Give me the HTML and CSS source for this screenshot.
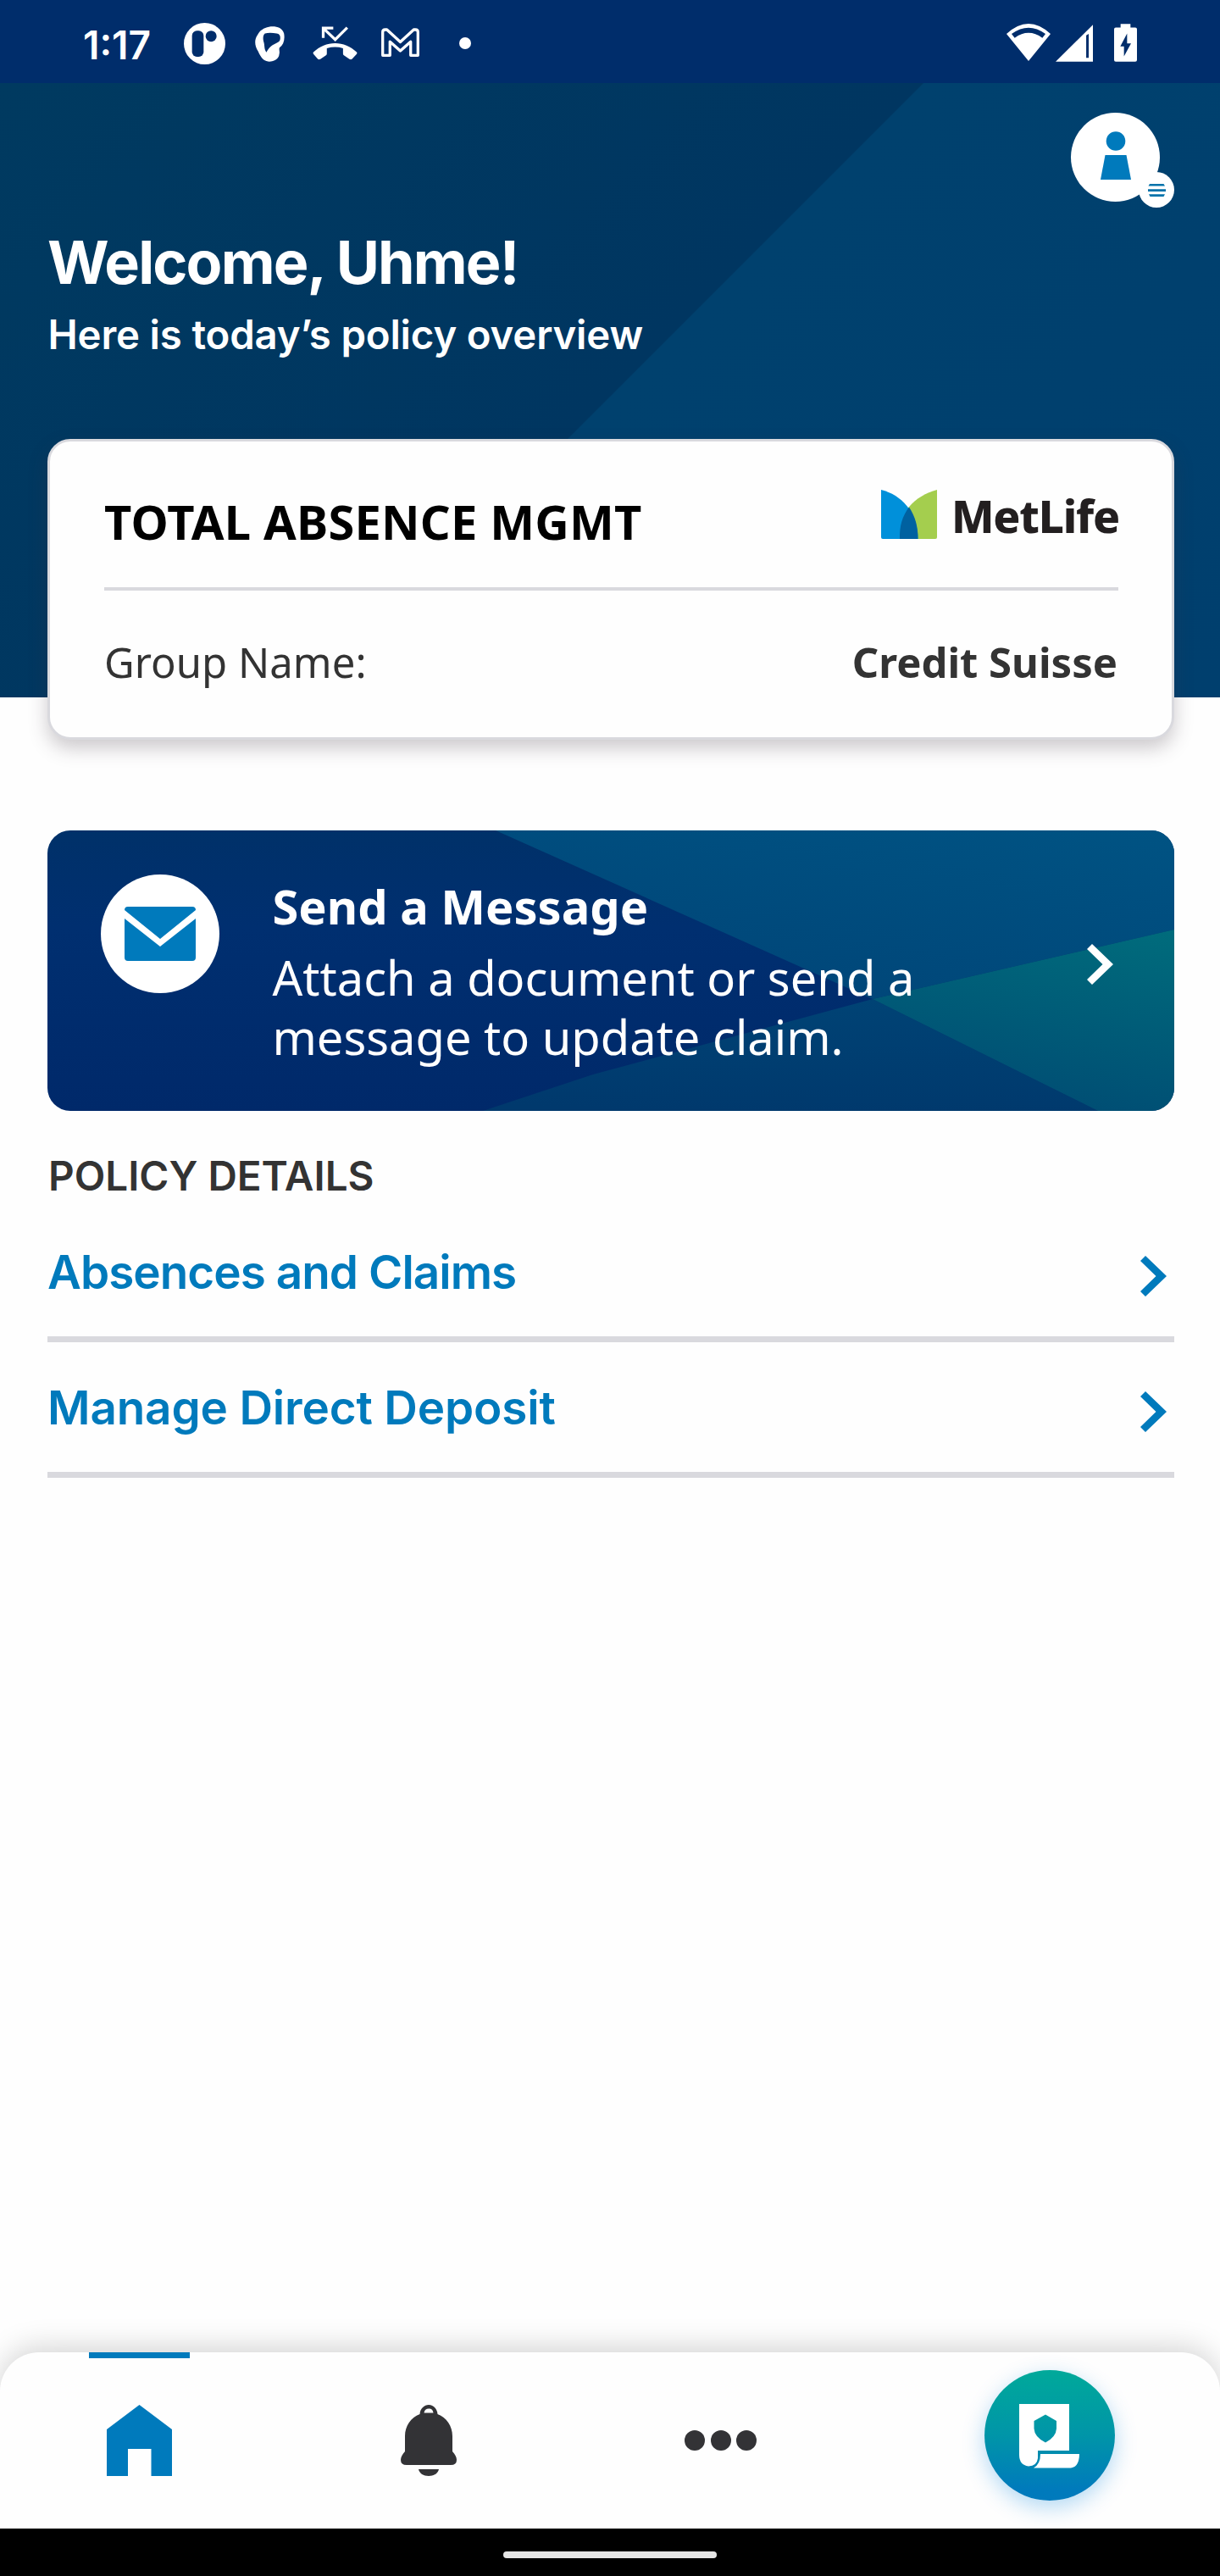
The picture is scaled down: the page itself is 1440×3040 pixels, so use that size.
FILE: index.html
```html
<!DOCTYPE html>
<html lang="en">
<head>
<meta charset="utf-8">
<title>MetLife</title>
<link rel="stylesheet" href="styles.css">
</head>
<body>
<div class="status">
  <div class="status-left">
    <span class="clock">1:17</span>
    <svg class="st-patreon" viewBox="51 50 147 147"><circle cx="124.500" cy="123.500" r="73.500" fill="#fff"/><rect x="80" y="78" width="41" height="92" rx="17" fill="#002d6b"/><circle cx="147.500" cy="97" r="19.500" fill="#002d6b"/></svg>
    <svg class="st-head" viewBox="303 62 105 127"><path fill="#fff" fill-rule="evenodd" d="M352 64C372 60 400 64 406 88C410 110 404 128 390 138C387 146 392 152 389 162C388 178 372 188 353 188C332 187 323 172 314 152C300 130 300 108 312 92C320 76 334 68 352 64ZM338 88C332 92 330 104 333 116C338 130 334 142 343 155C350 142 356 136 364 130C374 124 390 120 392 110C394 98 392 90 380 88C366 85 350 84 338 88Z"/></svg>
    <svg class="st-call" viewBox="506 64 161 120"><path fill="none" stroke="#fff" stroke-width="10" d="M544 105V70H580M546 72L587 111L630 68"/><path fill="#fff" d="M509 156C552 113 621 113 664 156Q667 159 664 163L647 181Q643 184 638 181L618 167Q615 165 615 161V142Q587 133 557 142V161Q557 165 554 167L534 181Q529 184 525 181L509 163Q506 159 509 156Z"/></svg>
    <svg class="st-mail" viewBox="749 69 136 103"><path fill="none" stroke="#fff" stroke-width="10" stroke-linejoin="round" d="M754 84Q754 75 763 75H769L817 119L865 75H871Q880 75 880 84V167H854V118L817 151L780 118V167H754Z"/></svg>
    <span class="st-dot"></span>
  </div>
  <div class="status-right">
    <svg class="st-wifi" viewBox="145 85 156 132"><path fill="#fff" fill-rule="evenodd" d="M223 217L145 121Q223 49 301 121ZM163 121L174 135Q223 100 272 135L283 121Q223 77 163 121Z"/></svg>
    <svg class="st-signal" viewBox="317 86 133 132"><path fill="#fff" fill-rule="evenodd" d="M317 218L450 86V218ZM426 124V204H435V119Z"/></svg>
    <svg class="st-battery" viewBox="525 85 81 134"><path fill="#fff" d="M548 85H583V98H600Q606 98 606 104V213Q606 219 600 219H531Q525 219 525 213V104Q525 98 531 98H548Z"/><path fill="#002d6b" d="M571 119L547 165H560V200L585 154H571Z"/></svg>
  </div>
</div>

<header class="header">
  <div class="profile">
    <div class="avatar">
      <svg class="person" viewBox="0 0 36 57"><circle cx="18" cy="11.500" r="11.300"/><path d="M5.500 28H30.500L36 57H0Z"/></svg>
      <span class="menu-badge"><svg viewBox="0 0 21 15"><path d="M2 0H18.500L20 2.500H.5ZM0 6.300H21V8.900H0ZM1 12.300H20L18.500 15H2.500Z"/></svg></span>
    </div>
  </div>
  <h1 class="welcome">Welcome, Uhme!</h1>
  <p class="sub">Here is today’s policy overview</p>
  <section class="card">
    <div class="card-top">
      <h2 class="card-title">TOTAL ABSENCE MGMT</h2>
      <div class="brand">
        <svg class="mark" viewBox="0 0 66 58"><path fill="#a4ce4e" d="M66 0C40 7 19 27 22 58H64Q66 58 66 56Z"/><path fill="#0090da" d="M0 0C24 6 43 26 43.500 58H2Q0 58 0 56Z"/><path fill="#0061a0" d="M33 20.500C25 31 21.500 43 22 58H43.500C43.500 43 40 31 33 20.500Z"/></svg>
        <span class="brand-name">MetLife</span>
      </div>
    </div>
    <div class="card-row"><span class="label">Group Name:</span><span class="value">Credit Suisse</span></div>
  </section>
</header>

<main class="main">
  <a class="banner">
    <svg class="facets" viewBox="0 0 1330 331" preserveAspectRatio="none">
      <defs>
        <linearGradient id="g1" x1="0" y1="0" x2="0" y2="1"><stop offset="0" stop-color="#003169"/><stop offset=".35" stop-color="#002f70"/><stop offset="1" stop-color="#00296a"/></linearGradient>
        <linearGradient id="g2" x1="1" y1="0" x2=".3" y2="1"><stop offset="0" stop-color="#005383"/><stop offset="1" stop-color="#004578"/></linearGradient>
        <linearGradient id="g3" x1="1" y1="0" x2=".7" y2="1"><stop offset="0" stop-color="#006c7c"/><stop offset="1" stop-color="#004e74"/></linearGradient>
        <linearGradient id="g4" x1=".6" y1="0" x2=".5" y2="1"><stop offset="0" stop-color="#004375"/><stop offset="1" stop-color="#00396d"/></linearGradient>
      </defs>
      <path fill="url(#g1)" d="M0 0H1330V331H0Z"/>
      <path fill="url(#g2)" d="M529 0H1330V117L974 199Z"/>
      <path fill="url(#g4)" d="M974 199L644 288L514 331H1240Z"/>
      <path fill="url(#g3)" d="M1330 117L974 199L1240 331H1330Z"/>
    </svg>
    <span class="mail-circle"><svg viewBox="0 0 84 64"><path d="M4 0H80Q84 0 84 4L42 38L0 4Q0 0 4 0ZM0 14L42 47L84 14V60Q84 64 80 64H4Q0 64 0 60Z"/></svg></span>
    <span class="banner-text">
      <strong class="banner-title">Send a Message</strong>
      <span class="banner-body">Attach a document or send a<br>message to update claim.</span>
    </span>
    <svg class="chevron chevron-light" viewBox="0 0 31 48"><path d="M6 0L31 24L6 48L0 42L18.500 24L0 6Z"/></svg>
  </a>

  <h3 class="section-title">POLICY DETAILS</h3>
  <a class="row"><span class="row-text absences">Absences and Claims</span><svg class="chevron" viewBox="0 0 31 48"><path d="M6 0L31 24L6 48L0 42L18.500 24L0 6Z"/></svg></a>
  <a class="row"><span class="row-text">Manage Direct Deposit</span><svg class="chevron" viewBox="0 0 31 48"><path d="M6 0L31 24L6 48L0 42L18.500 24L0 6Z"/></svg></a>
</main>

<nav class="nav">
  <a class="tab tab-home"><svg viewBox="0 0 77 84"><path d="M38.500 0L77 29V84H52.500V52H25V84H0V29Z"/></svg></a>
  <a class="tab tab-bell"><svg viewBox="0 0 66 84"><path fill-rule="evenodd" d="M22.500 11C23 4 28 0 33 0S43 4 43.500 11C54 15 61 25 61 37V55C64 58 66 62 66 65Q66 71 59 71H7Q0 71 0 65C0 62 2 58 5 55V37C5 25 12 15 22.500 11ZM27.500 9.500H38.500C38 6 36 4.500 33 4.500S28 6 27.500 9.500ZM21 76H45C44 81 39 84 33 84S22 81 21 76Z"/></svg></a>
  <a class="tab tab-more"><span></span><span></span><span></span></a>
  <a class="tab tab-policy"><span class="fab"><svg viewBox="0 0 72 76"><path fill-rule="evenodd" d="M0 0H59V55H22V64Q21 73 11 73.500Q0 72 0 60ZM31 12.500L17.500 20V29Q18 39 31 45.500Q43.500 39 44 29V20Z"/><path d="M25 59H71Q71 74 61 75.500H17Q25 71 25 59Z"/></svg></span></a>
</nav>
<div class="gesture"><span></span></div>
</body>
</html>
```
FILE: styles.css
```css
* { box-sizing: border-box; margin: 0; padding: 0; }
body {
  width: 1440px;
  height: 3040px;
  display: flex;
  flex-direction: column;
  overflow: hidden;
  background: #fefefe;
  color: #333;
  font-family: "Noto Sans", "Open Sans", sans-serif;
}
svg { display: block; flex: none; }

.status {
  height: 98px;
  flex: none;
  display: flex;
  justify-content: space-between;
  padding: 0 98px 0 98px;
  background: #002d6b;
}
.status-left, .status-right { display: flex; align-items: flex-start; }
.clock {
  width: 119px;
  margin-top: 23px;
  font: 600 46px/60px Inter, sans-serif;
  color: #fff;
}
.st-patreon { width: 49px; height: 49px; margin-top: 26.5px; }
.st-head { width: 35px; height: 42px; margin: 31px 0 0 35px; }
.st-call { width: 53px; height: 40px; margin: 31px 0 0 33px; }
.st-mail { width: 45px; height: 34px; margin: 33px 0 0 28px; }
.st-dot { width: 14px; height: 14px; margin: 44px 0 0 47px; border-radius: 50%; background: #fff; }
.st-wifi { width: 52px; height: 44px; margin-top: 28px; }
.st-signal { width: 44px; height: 44px; margin: 29px 0 0 6px; }
.st-battery { width: 27px; height: 45px; margin: 28px 0 0 25px; }

.header {
  height: 725px;
  flex: none;
  padding: 35px 54px 0 56px;
  background: linear-gradient(135deg, #003a60, #003661 50.3%, #00416e 50.4%, #003f6e);
  color: #fff;
}
.profile { display: flex; justify-content: flex-end; height: 137px; }
.avatar {
  position: relative;
  width: 105px;
  height: 105px;
  margin-right: 17px;
  border-radius: 50%;
  background: #fff;
  display: flex;
  justify-content: center;
}
.person { width: 36px; height: 57px; margin-top: 22px; fill: #007abc; }
.menu-badge {
  position: absolute;
  left: 80px;
  top: 70px;
  width: 42px;
  height: 42px;
  border-radius: 50%;
  background: #fff;
  display: flex;
  align-items: center;
  justify-content: center;
}
.menu-badge svg { width: 21px; height: 15px; fill: #0072aa; }
.welcome { font: 650 70px/80px Inter, sans-serif; letter-spacing: -1.85px; }
.sub { margin-top: 14.5px; margin-left: .5px; font: 620 47.3px/60px Inter, sans-serif; letter-spacing: -.15px; }

.card {
  width: 1330px;
  height: 355px;
  margin-top: 93.5px;
  padding: 56px 63px 0 64px;
  border: 3px solid #d9d9de;
  border-radius: 27px;
  background: #fefefe;
  color: #333;
  box-shadow: 0 10px 22px rgba(60, 50, 60, .26);
}
.card-top {
  height: 120px;
  display: flex;
  justify-content: space-between;
  border-bottom: 4px solid #d9d9de;
}
.card-title { font-size: 56px; line-height: 76px; color: #000; letter-spacing: .2px; white-space: nowrap; }
.brand { display: flex; }
.mark { width: 66px; height: 58px; margin-top: 1px; }
.brand-name {
  width: 197px;
  margin: -4px 0 0 17px;
  font-size: 53px;
  font-weight: 800;
  line-height: 72px;
  letter-spacing: -1.2px;
  color: #231f20;
}
.card-row {
  display: flex;
  justify-content: space-between;
  margin-top: 50px;
  font-size: 49px;
  line-height: 68px;
}
.label { letter-spacing: .05px; }
.value { margin-right: 1px; font-weight: 700; }

.main { flex: 1; padding: 157px 54px 0 56px; }
.banner {
  position: relative;
  height: 331px;
  display: flex;
  padding: 52px 72px 0 63px;
  border-radius: 27px;
  overflow: hidden;
  color: #fff;
}
.facets { position: absolute; inset: 0; width: 100%; height: 100%; }
.mail-circle {
  position: relative;
  width: 140px;
  height: 140px;
  border-radius: 50%;
  background: #fff;
  display: flex;
  align-items: center;
  justify-content: center;
}
.mail-circle svg { width: 84px; height: 64px; fill: #007abc; }
.banner-text { position: relative; flex: 1; margin: 2px 0 0 62.5px; font-size: 56px; line-height: 70px; }
.banner-title, .banner-body { display: block; }
.banner-body { margin-top: 14px; }
.chevron { width: 31px; height: 48px; margin-top: 58px; fill: #007abc; }
.chevron-light { position: relative; margin-top: 82px; fill: #fff; }

.section-title { margin: 47px 0 0 1px; font: 640 47.6px/60px Inter, sans-serif; }
.row {
  height: 160px;
  display: flex;
  justify-content: space-between;
  padding-right: 9px;
  border-bottom: 7px solid #d9d9de;
  color: #007abc;
}
.section-title + .row { margin-top: 6px; }
.row-text { margin-top: 42px; font: 620 54.8px/70px Inter, sans-serif; letter-spacing: -.15px; }
.absences { letter-spacing: -.95px; }

.nav {
  height: 208px;
  flex: none;
  display: flex;
  background: #fefefe;
  border-radius: 46px 46px 0 0;
  box-shadow: 0 -6px 34px rgba(0, 0, 0, .17);
}
.tab { display: flex; justify-content: center; }
.tab-home { width: 329px; padding-top: 62px; background: linear-gradient(#007abc, #007abc) 105px 0 / 119px 7px no-repeat; }
.tab-home svg { width: 77px; height: 84px; fill: #007abc; }
.tab-bell { width: 353px; padding-top: 62px; }
.tab-bell svg { width: 66px; height: 84px; fill: #333336; }
.tab-more { width: 337px; padding-top: 92px; gap: 6.500px; }
.tab-more span { width: 24px; height: 24px; border-radius: 50%; background: #333336; }
.tab-policy { width: 421px; padding: 21px 0 0 19px; }
.fab {
  width: 154px;
  height: 154px;
  display: flex;
  padding: 40px 0 0 41px;
  border-radius: 50%;
  background: linear-gradient(#00a99a, #0095a8 50%, #007abc 92%);
  box-shadow: 0 8px 26px rgba(0, 130, 220, .3);
}
.fab svg { width: 72px; height: 76px; fill: #fff; }

.gesture {
  height: 56px;
  flex: none;
  display: flex;
  justify-content: center;
  padding-top: 27px;
  background: #000;
  position: relative;
}
.gesture span { width: 252px; height: 8px; border-radius: 4px; background: #e6e6e6; }
```
